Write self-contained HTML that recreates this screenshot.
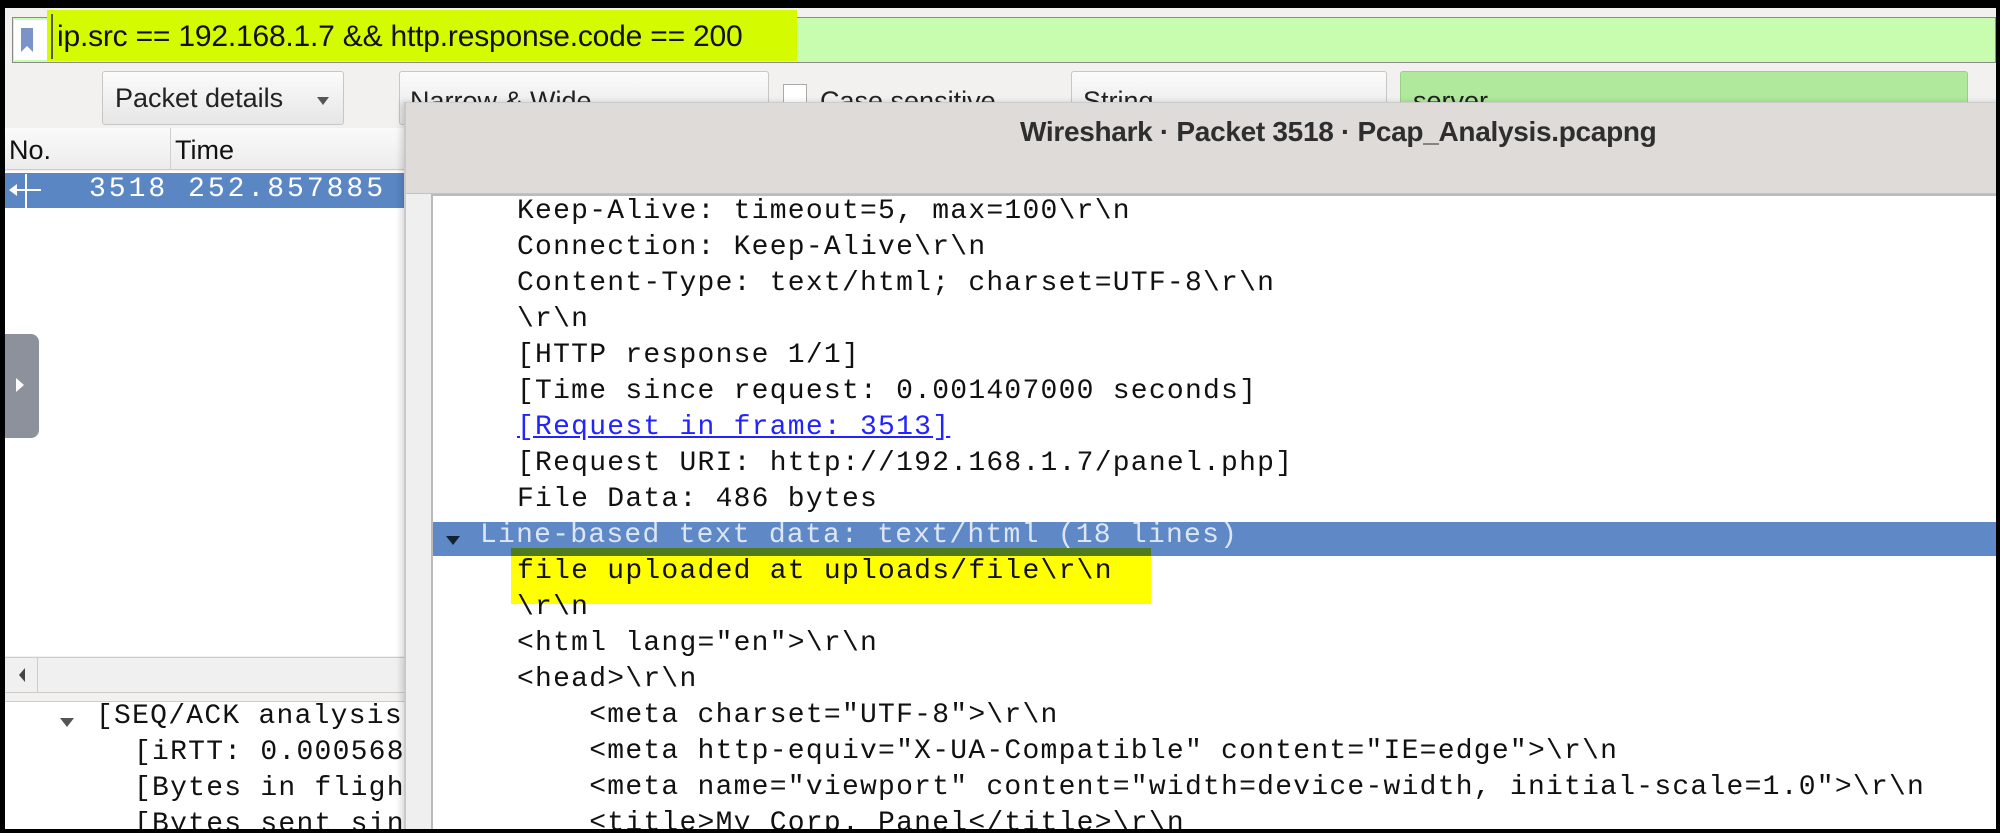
<!DOCTYPE html>
<html><head><meta charset="utf-8"><style>
*{margin:0;padding:0;box-sizing:border-box}
body{width:2000px;height:833px;overflow:hidden;background:#000;position:relative;font-family:"Liberation Sans",sans-serif}
.a{position:absolute}
.m{font-family:"Liberation Mono",monospace;font-size:28px;letter-spacing:1.25px;white-space:pre;line-height:36px}
.s{font-size:27px;white-space:pre}
</style></head><body>
<div class="a" style="left:5px;top:8px;width:1991px;height:821px;background:#f2f1f0;overflow:hidden">
  <!-- filter bar -->
  <div class="a" style="left:7px;top:9px;width:1984px;height:46px;background:#c8fdb0;border:1px solid #8a8a8a"></div>
  <div class="a" style="left:9px;top:12px;width:36px;height:40px;background:#fff"></div>
  <div class="a" style="left:16px;top:20px;width:12px;height:24px;background:#7b93c9;clip-path:polygon(0 0,100% 0,100% 100%,50% 75%,0 100%)"></div>
  <div class="a" style="left:42px;top:2px;width:750px;height:51px;background:#d4fb00"></div>
  <div class="a" style="left:46px;top:6px;width:2px;height:45px;background:#555"></div>
  <div class="a s" style="left:52px;top:12px;font-size:30px;color:#111;letter-spacing:-0.2px">ip.src == 192.168.1.7 &amp;&amp; http.response.code == 200</div>
  <!-- toolbar -->
  <div class="a" style="left:97px;top:63px;width:242px;height:54px;background:linear-gradient(#fbfbfb,#e6e6e6);border:1px solid #c6c6c6;border-radius:3px"></div>
  <div class="a s" style="left:110px;top:75px;color:#222">Packet details</div>
  <div class="a" style="left:312px;top:89px;border-left:6px solid transparent;border-right:6px solid transparent;border-top:8px solid #555"></div>
  <div class="a" style="left:394px;top:63px;width:370px;height:54px;background:linear-gradient(#fbfbfb,#e6e6e6);border:1px solid #c6c6c6;border-radius:3px"></div>
  <div class="a s" style="left:405px;top:78px;color:#222">Narrow &amp; Wide</div>
  <div class="a" style="left:778px;top:76px;width:24px;height:24px;background:#fff;border:1px solid #aaa"></div>
  <div class="a s" style="left:815px;top:78px;color:#222">Case sensitive</div>
  <div class="a" style="left:1066px;top:63px;width:316px;height:54px;background:linear-gradient(#fbfbfb,#e6e6e6);border:1px solid #c6c6c6;border-radius:3px"></div>
  <div class="a s" style="left:1078px;top:78px;color:#222">String</div>
  <div class="a" style="left:1395px;top:63px;width:568px;height:54px;background:#b0e89c;border:1px solid #9ccf88;border-radius:3px"></div>
  <div class="a s" style="left:1408px;top:78px;color:#222">server</div>
  <!-- packet list -->
  <div class="a" style="left:0;top:120px;width:420px;height:42px;background:linear-gradient(#fafafa,#ececec);border-bottom:1px solid #ccc"></div>
  <div class="a" style="left:165px;top:120px;width:1px;height:42px;background:#d0d0d0"></div>
  <div class="a s" style="left:4px;top:127px;color:#111">No.</div>
  <div class="a s" style="left:170px;top:127px;color:#111">Time</div>
  <div class="a" style="left:0;top:163px;width:420px;height:485px;background:#fff"></div>
  <div class="a" style="left:0;top:165px;width:420px;height:35px;background:#5b86c4"></div>
  <div class="a" style="left:6px;top:181px;width:30px;height:2px;background:#fff"></div>
  <div class="a" style="left:4px;top:176px;border-top:6px solid transparent;border-bottom:6px solid transparent;border-right:8px solid #fff"></div>
  <div class="a" style="left:20px;top:166px;width:2px;height:34px;background:#fff"></div>
  <div class="a m" style="left:84px;top:164px;color:#fff;letter-spacing:3px;font-size:28px">3518 252.857885</div>
  <div class="a" style="left:0;top:326px;width:34px;height:104px;background:#8c919b;border-radius:0 8px 8px 0"></div>
  <div class="a" style="left:11px;top:370px;border-top:7px solid transparent;border-bottom:7px solid transparent;border-left:8px solid #fff"></div>
  <div class="a" style="left:0;top:649px;width:420px;height:36px;background:#f0f0f0;border-top:1px solid #ccc;border-bottom:1px solid #ccc"></div>
  <div class="a" style="left:32px;top:649px;width:1px;height:36px;background:#ccc"></div>
  <div class="a" style="left:14px;top:660px;border-top:7px solid transparent;border-bottom:7px solid transparent;border-right:6px solid #444"></div>
  <div class="a" style="left:0;top:693px;width:420px;height:130px;background:#fff;border-top:1px solid #ccc"></div>
  <div class="a" style="left:55px;top:710px;border-left:7px solid transparent;border-right:7px solid transparent;border-top:9px solid #555"></div>
  <div class="a m" style="left:91px;top:691px;color:#111">[SEQ/ACK analysis]</div>
  <div class="a m" style="left:129px;top:727px;color:#111">[iRTT: 0.000568</div>
  <div class="a m" style="left:129px;top:763px;color:#111">[Bytes in flight</div>
  <div class="a m" style="left:129px;top:799px;color:#111">[Bytes sent sin</div>
  <!-- dialog -->
  <div class="a" style="left:399px;top:94px;width:1600px;height:740px;background:#efefef;border-left:2px solid #c8c8c8;box-shadow:-3px 0 6px rgba(0,0,0,.15)">
    <div class="a" style="left:0;top:0;width:1600px;height:92px;background:#dedbd8;border-top:1px solid #ccc;border-bottom:1px solid #c4c1be"></div>
    <div class="a" style="left:614px;top:14px;font-size:28px;color:#2e2e2e;white-space:pre;font-weight:bold;letter-spacing:-0.3px">Wireshark · Packet 3518 · Pcap_Analysis.pcapng</div>
    <div class="a" style="left:25px;top:92px;width:1580px;height:660px;background:#fff;border-top:2px solid #bbb;border-left:2px solid #bbb">
      <div class="a" style="left:0;top:326px;width:1580px;height:34px;background:#5f88c6"></div>
      <div class="a" style="left:13px;top:340px;border-left:7px solid transparent;border-right:7px solid transparent;border-top:9px solid #123"></div>
      <div class="a" style="left:78px;top:352px;width:640px;height:8px;background:#507a1e"></div>
      <div class="a" style="left:78px;top:360px;width:640px;height:48px;background:#ffff00"></div>
      <div class="a m" style="left:84px;top:-2px;color:#111">Keep-Alive: timeout=5, max=100\r\n
Connection: Keep-Alive\r\n
Content-Type: text/html; charset=UTF-8\r\n
\r\n
[HTTP response 1/1]
[Time since request: 0.001407000 seconds]
<span style="color:#2323ff;text-decoration:underline">[Request in frame: 3513]</span>
[Request URI: http://192.168.1.7/panel.php]
File Data: 486 bytes
<span style="color:#dde6f5;margin-left:-37px">Line-based text data: text/html (18 lines)</span>
file uploaded at uploads/file\r\n
\r\n
&lt;html lang="en"&gt;\r\n
&lt;head&gt;\r\n
    &lt;meta charset="UTF-8"&gt;\r\n
    &lt;meta http-equiv="X-UA-Compatible" content="IE=edge"&gt;\r\n
    &lt;meta name="viewport" content="width=device-width, initial-scale=1.0"&gt;\r\n
    &lt;title&gt;My Corp. Panel&lt;/title&gt;\r\n</div>
    </div>
  </div>
</div>
</body></html>
